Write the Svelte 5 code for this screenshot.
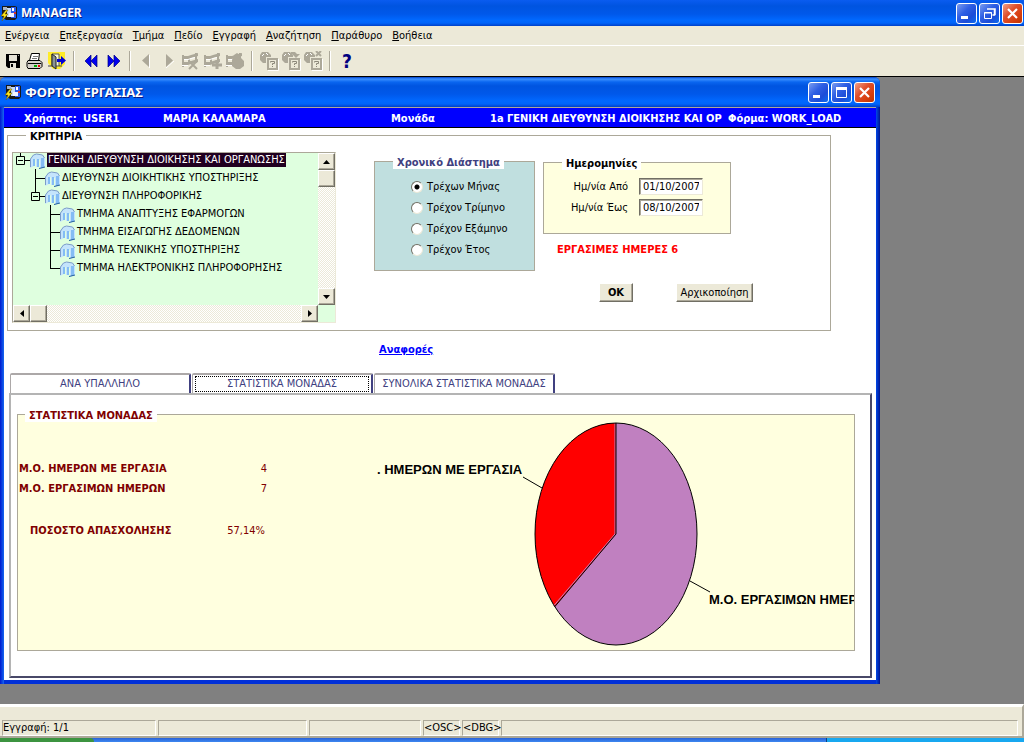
<script lang="ts">
    type Node = { text: string, depth: number, box?: boolean, last?: boolean, selected?: boolean }

    const menu = ["Ενέργεια", "Επεξεργασία", "Τμήμα", "Πεδίο", "Εγγραφή", "Αναζήτηση", "Παράθυρο", "Βοήθεια"]
    const nodes: Node[] = [
        { text: "ΓΕΝΙΚΗ ΔΙΕΥΘΥΝΣΗ ΔΙΟΙΚΗΣΗΣ ΚΑΙ ΟΡΓΑΝΩΣΗΣ", depth: 0, box: true, last: true, selected: true },
        { text: "ΔΙΕΥΘΥΝΣΗ ΔΙΟΙΚΗΤΙΚΗΣ ΥΠΟΣΤΗΡΙΞΗΣ", depth: 1 },
        { text: "ΔΙΕΥΘΥΝΣΗ ΠΛΗΡΟΦΟΡΙΚΗΣ", depth: 1, box: true, last: true },
        { text: "ΤΜΗΜΑ ΑΝΑΠΤΥΞΗΣ ΕΦΑΡΜΟΓΩΝ", depth: 2 },
        { text: "ΤΜΗΜΑ ΕΙΣΑΓΩΓΗΣ ΔΕΔΟΜΕΝΩΝ", depth: 2 },
        { text: "ΤΜΗΜΑ ΤΕΧΝΙΚΗΣ ΥΠΟΣΤΗΡΙΞΗΣ", depth: 2 },
        { text: "ΤΜΗΜΑ ΗΛΕΚΤΡΟΝΙΚΗΣ ΠΛΗΡΟΦΟΡΗΣΗΣ", depth: 2, last: true },
    ]
    const periods = ["Τρέχων Μήνας", "Τρέχον Τρίμηνο", "Τρέχον Εξάμηνο", "Τρέχον Έτος"]
    const tabs = ["ΑΝΑ ΥΠΑΛΛΗΛΟ", "ΣΤΑΤΙΣΤΙΚΑ ΜΟΝΑΔΑΣ", "ΣΥΝΟΛΙΚΑ ΣΤΑΤΙΣΤΙΚΑ ΜΟΝΑΔΑΣ"]

    let period = $state(periods[0])
    let dateFrom = $state("01/10/2007")
    let dateTo = $state("08/10/2007")
    let activeTab = $state(1)

    const workDays = 4
    const totalDays = 7

    // Pie geometry
    const cx = 247, cy = 112, rx = 81, ry = 111
    const angle = 2 * Math.PI * totalDays / (totalDays + workDays)
    const edgeX = cx + rx * Math.sin(angle)
    const edgeY = cy - ry * Math.cos(angle)

    /** Put back the default period and dates */
    function reset() {
        period = periods[0]
        dateFrom = "01/10/2007"
        dateTo = "08/10/2007"
    }
</script>

{#snippet appIcon()}
    <svg width="16" height="16" viewBox="0 0 16 16" aria-hidden="true">
        <path d="M1 1h13l2 1v11l-2 2H5L1 12z" fill="#181818" />
        <path d="M2 2h4v3H2z" fill="#a9b4c8" />
        <path d="M6 3h4v9H6z" fill="#c8dcf8" />
        <path d="M10 2h5v11h-5z" fill="#2a5cf0" />
        <path d="M8 8h5v4H8z" fill="#f4f4ff" />
        <path d="M11 3h2v3h-2z" fill="#fff" />
        <path d="M13 7h2v2h-2z" fill="#d03030" />
        <path d="M5 5L0 11h3l-2 5 6-7H4l3-4z" fill="#ffe818" stroke="#6b5500" stroke-width=".5" />
    </svg>
{/snippet}

{#snippet winButtons(restore: boolean)}
    <div class="win-buttons">
        <button class="win-btn" aria-label="Ελαχιστοποίηση">
            <svg width="19" height="19"><path d="M4 12h7v3H4z" fill="#fff" /></svg>
        </button>
        <button class="win-btn" aria-label="Μεγιστοποίηση">
            <svg width="19" height="19">
                {#if restore}
                    <path d="M7 5h8v6M14.500 5v6h-2" fill="none" stroke="#fff" stroke-width="1.500" />
                    <path d="M4.500 8.500h7v6h-7zM4 9h8" fill="none" stroke="#fff" />
                {:else}
                    <path d="M4.500 5v9.500h10V5" fill="none" stroke="#fff" /><path d="M4 4h11v3H4z" fill="#fff" />
                {/if}
            </svg>
        </button>
        <button class="win-btn close" aria-label="Κλείσιμο">
            <svg width="19" height="19"><path d="M5 5l9 9M14 5l-9 9" stroke="#fff" stroke-width="2.200" /></svg>
        </button>
    </div>
{/snippet}

{#snippet helpBox()}
    <path d="M1 4l2-3h6l3 3v2H7v6H4L1 9z" fill="#aca899" /><path d="M3 5l2-2M7 2l2 2" stroke="#fff" />
    <path d="M19.500 8v11.500H9" fill="none" stroke="#fff" />
    <path d="M8 7h11v12H8z" fill="#aca899" /><path d="M10 9h7v8h-7z" fill="#ece9d8" />
    <path d="M11.500 11.500v-1h4v2h-2v1.500M13.500 15v1" fill="none" stroke="#8c887a" />
{/snippet}

{#snippet fence()}
    <path d="M1 5h6l3-1 7-2v3l-7 2-3 1H1zM1 11h6l3-1 7-2v3l-7 2-3 1H1z" fill="#aca899" />
    <path d="M2 4v12M8 5v8M15 2v10" stroke="#aca899" stroke-width="2" />
    <path d="M3 8.500h4l3-1 4-1M1 14.500h6" fill="none" stroke="#fff" />
{/snippet}

<div class="app">
    <header class="title-bar main-title">
        {@render appIcon()}
        <h1>MANAGER</h1>
        {@render winButtons(true)}
    </header>

    <nav class="menu">
        {#each menu as item}
            <button><u>{item[0]}</u>{item.slice(1)}</button>
        {/each}
    </nav>

    <div class="toolbar">
        <button aria-label="Αποθήκευση">
            <svg width="20" height="20"><path d="M3 3h14v14H5l-2-2z" fill="#000" /><path d="M6 4h8v6H6zM7 12h6v5H7z" fill="#e4e2d6" /><path d="M8 13h2v3H8z" fill="#000" /><path d="M15 4h1v1h-1z" fill="#999" /></svg>
        </button>
        <button aria-label="Εκτύπωση">
            <svg width="20" height="20"><path d="M6.500 2.500h8l-1 7h-9z" fill="#fff" stroke="#000" /><path d="M8 5.500h5M7 7.500h5" stroke="#777" /><path d="M3 9.500h12l2 2v4l-2 2H3l-1-2v-4z" fill="#d4d0c8" stroke="#000" /><path d="M3 12.500h13" stroke="#000" /><path d="M9 15h3" stroke="#0a0" stroke-width="2" /><path d="M13 15h2" stroke="#e00" stroke-width="2" /></svg>
        </button>
        <button aria-label="Έξοδος">
            <svg width="20" height="20"><path d="M1 1h17v12l-5 5H6l-5-6z" fill="#ffec28" /><path d="M5 3h7v12H5z" fill="#f8f8d8" stroke="#555" /><path d="M5 3l4 3v12l-4-3z" fill="#8a9494" stroke="#222" /><path d="M1 15h5M12 15h3" stroke="#444" /><path d="M10 8h4V5l5 4.500-5 4.500v-3h-4z" fill="#0000d8" /></svg>
        </button>
        <i class="sep"></i>
        <button aria-label="Πρώτη">
            <svg width="20" height="20"><path d="M10 4v12l-6-6zM16 4v12l-6-6z" fill="#0000f0" stroke="#000080" stroke-width=".7" /></svg>
        </button>
        <button aria-label="Τελευταία">
            <svg width="20" height="20"><path d="M5 4v12l6-6zM11 4v12l6-6z" fill="#0000f0" stroke="#000080" stroke-width=".7" /></svg>
        </button>
        <i class="sep"></i>
        <button aria-label="Προηγούμενη">
            <svg width="20" height="20"><path d="M12.500 4v13" stroke="#fff" /><path d="M12 3v13l-7-6.500z" fill="#aca899" /></svg>
        </button>
        <button aria-label="Επόμενη">
            <svg width="20" height="20"><path d="M7 17l8-7" stroke="#fff" /><path d="M7 3v13l7-6.500z" fill="#aca899" /></svg>
        </button>
        <button aria-label="Διαγραφή εγγραφής">
            <svg width="20" height="20">{@render fence()}<path d="M8 10l8 8M16 10l-8 8" stroke="#aca899" stroke-width="2" /></svg>
        </button>
        <button aria-label="Νέα εγγραφή">
            <svg width="20" height="20">{@render fence()}<path d="M9 14h10M14 9v9" stroke="#aca899" stroke-width="3" /></svg>
        </button>
        <button aria-label="Κλείδωμα εγγραφής">
            <svg width="20" height="20">{@render fence()}<path d="M7 9l2-5 3-2 3 2 1 3 3 3v5l-4 3h-4l-4-3z" fill="#aca899" /></svg>
        </button>
        <i class="sep"></i>
        <button aria-label="Εισαγωγή ερωτήματος"><svg width="20" height="20">{@render helpBox()}</svg></button>
        <button aria-label="Εκτέλεση ερωτήματος"><svg width="20" height="20">{@render helpBox()}<path d="M10 1h4l2 2h3l-4 4-4-4h-1z" fill="#aca899" /></svg></button>
        <button aria-label="Ακύρωση ερωτήματος"><svg width="20" height="20">{@render helpBox()}<path d="M13 0l5 5M18 0l-5 5" stroke="#aca899" stroke-width="2" /></svg></button>
        <i class="sep"></i>
        <button class="help">?</button>
    </div>

    <main class="mdi">
        <section class="window">
            <header class="title-bar">
                {@render appIcon()}
                <h2>ΦΟΡΤΟΣ ΕΡΓΑΣΙΑΣ</h2>
                {@render winButtons(false)}
            </header>

            <div class="body">
                <div class="info">
                    <span>Χρήστης:</span>
                    <span>USER1</span>
                    <span>ΜΑΡΙΑ ΚΑΛΑΜΑΡΑ</span>
                    <span>Μονάδα</span>
                    <span>1a ΓΕΝΙΚΗ ΔΙΕΥΘΥΝΣΗ ΔΙΟΙΚΗΣΗΣ ΚΑΙ ΟΡ</span>
                    <span>Φόρμα: WORK_LOAD</span>
                </div>

                <fieldset class="criteria">
                    <legend>ΚΡΙΤΗΡΙΑ</legend>
                    <div class="tree">
                        <ul>
                            {#each nodes as node}
                                <li class="depth{node.depth}">
                                    <svg width="34" height="18" aria-hidden="true">
                                        <path d={node.last ? "M7.500 0v9.500" : "M7.500 0v18"} stroke="#000" />
                                        <path d="M7 9.500h10" stroke="#000" />
                                        {#if node.box}
                                            <path d="M3.500 5.500h8v8h-8z" fill="#dfffdf" stroke="#000" />
                                            <path d="M5 9.500h5" stroke="#000" />
                                        {/if}
                                        <path d="M17 17V8l3-4 3-1 7 1 2 3v9l-5 2V9l-2-1v8h-2V8l-2 1v6z" fill="#c4e4fc" />
                                        <path d="M20 8h2v7h-2zM24 8h2v8h-2zM28 7h3v9l-3 1z" fill="#84bcf4" />
                                        <path d="M17.500 16V8l3-4 3-1 6 1 2 3" fill="none" stroke="#7c9cc8" />
                                        <path d="M26 17.500l6-1.500" stroke="#24609c" />
                                    </svg>
                                    <span class:selected={node.selected}>{node.text}</span>
                                </li>
                            {/each}
                        </ul>
                        <div class="scroll vertical">
                            <button aria-label="Πάνω"><svg width="7" height="4"><path d="M0 4h7L3.500 0z" /></svg></button>
                            <div class="thumb"></div>
                            <button class="end" aria-label="Κάτω"><svg width="7" height="4"><path d="M0 0h7L3.500 4z" /></svg></button>
                        </div>
                        <div class="scroll">
                            <button aria-label="Αριστερά"><svg width="4" height="7"><path d="M4 0v7L0 3.500z" /></svg></button>
                            <div class="thumb"></div>
                            <button class="end" aria-label="Δεξιά"><svg width="4" height="7"><path d="M0 0v7l4-3.500z" /></svg></button>
                        </div>
                    </div>

                    <fieldset class="period">
                        <legend>Χρονικό Διάστημα</legend>
                        {#each periods as p}
                            <label><input type="radio" name="period" value={p} bind:group={period}>{p}</label>
                        {/each}
                    </fieldset>

                    <div class="right">
                        <fieldset class="dates">
                            <legend>Ημερομηνίες</legend>
                            <label for="from">Ημ/νία Από</label>
                            <input id="from" type="text" bind:value={dateFrom}>
                            <label for="to">Ημ/νία Έως</label>
                            <input id="to" type="text" bind:value={dateTo}>
                        </fieldset>
                        <p class="days">ΕΡΓΑΣΙΜΕΣ ΗΜΕΡΕΣ 6</p>
                        <div class="actions">
                            <button class="ok">OK</button>
                            <button onclick={reset}>Αρχικοποίηση</button>
                        </div>
                    </div>
                </fieldset>

                <a class="reports" href="#reports">Αναφορές</a>

                <div class="tabs" role="tablist">
                    {#each tabs as tab, i}
                        <button role="tab" class:active={activeTab === i} aria-selected={activeTab === i} onclick={() => activeTab = i}>
                            <span>{tab}</span>
                        </button>
                    {/each}
                </div>

                <div class="panel" role="tabpanel">
                    <fieldset class="stats">
                        <legend>ΣΤΑΤΙΣΤΙΚΑ ΜΟΝΑΔΑΣ</legend>
                        <dl>
                            <div><dt>Μ.Ο. ΗΜΕΡΩΝ ΜΕ ΕΡΓΑΣΙΑ</dt><dd>{workDays}</dd></div>
                            <div><dt>Μ.Ο. ΕΡΓΑΣΙΜΩΝ ΗΜΕΡΩΝ</dt><dd>{totalDays}</dd></div>
                            <div class="total"><dt>ΠΟΣΟΣΤΟ ΑΠΑΣΧΟΛΗΣΗΣ</dt><dd>57,14%</dd></div>
                        </dl>
                        <svg class="chart" height="228">
                            <ellipse {cx} {cy} {rx} {ry} fill="#c080c0" />
                            <path d="M{cx} {cy}L{edgeX} {edgeY}A{rx} {ry} 0 0 1 {cx} {cy - ry}z" fill="#f00" />
                            <path d="M{cx - 1} {cy - ry}V{cy}L{edgeX - 1} {edgeY - 1}" fill="none" stroke="#c080c0" />
                            <path d="M{cx} {cy - ry}V{cy}L{edgeX} {edgeY}" fill="none" stroke="#000" />
                            <ellipse {cx} {cy} {rx} {ry} fill="none" stroke="#000" />
                            <path d="M154 55l19 11M321 159l20 11" stroke="#000" />
                            <text x="8" y="52">. ΗΜΕΡΩΝ ΜΕ ΕΡΓΑΣΙΑ</text>
                            <text x="340" y="182">Μ.Ο. ΕΡΓΑΣΙΜΩΝ ΗΜΕΡ</text>
                        </svg>
                    </fieldset>
                </div>
            </div>
        </section>
    </main>

    <footer class="status">
        <span class="record">Εγγραφή: 1/1</span>
        <span class="message"></span>
        <span class="list"></span>
        <span>&lt;OSC&gt;</span>
        <span>&lt;DBG&gt;</span>
        <span class="fill"></span>
    </footer>
    <div class="taskbar"><i class="start"></i><i class="tray"></i></div>
</div>

<style>
    :global(body){
        margin: 0;
        background: #808080;
    }
    .app{
        display: flex;
        flex-direction: column;
        min-height: 100vh;
        font: 11px/14px "DejaVu Sans Condensed", "DejaVu Sans", sans-serif;
        color: #000;
    }
    button, input{
        font: inherit;
        color: inherit;
        margin: 0;
        padding: 0;
        box-sizing: border-box;
    }
    fieldset{
        margin: 0;
        padding: 0;
        min-width: 0;
        border: 1px solid #aca899;
    }
    legend{
        padding: 2px 4px 0;
        line-height: 13px;
        font-weight: bold;
        background: #fff;
    }
    svg{
        display: block;
        flex: none;
    }

    /* Title bars */
    .title-bar{
        display: flex;
        align-items: center;
        gap: 4px;
        height: 30px;
        box-sizing: border-box;
        padding: 0 5px;
        background: linear-gradient(#0040c8 0, #3c90ff 2px, #0a66f0 5px, #0054e0 9px, #0058ea 17px, #0068ff 24px, #0064fa 27px, #0040c8 30px);
        border-radius: 6px 6px 0 0;
    }
    .main-title{
        height: 26px;
        padding: 0 1px;
        border-radius: 0;
        background: linear-gradient(#0a5cf0 0, #0054e0 6px, #0058ea 14px, #0068ff 20px, #0064fa 23px, #0040c8 26px);
    }
    h1, h2{
        flex: 1;
        margin: 0;
        font: bold 12px/18px "Noto Sans", sans-serif;
        color: #fff;
        text-shadow: 1px 1px 0 #0a1883;
    }
    h2{
        font-size: 13px;
    }
    .win-buttons{
        display: flex;
        gap: 2px;
    }
    .win-btn{
        width: 21px;
        height: 21px;
        border: 1px solid #fff;
        border-radius: 3px;
        background: linear-gradient(135deg, #7a9cf0, #2f5fe4 40%, #1c4cd8 70%, #0a6cf0);
    }
    .win-btn.close{
        background: linear-gradient(135deg, #f0a088, #e0502c 40%, #d84010 70%, #c03400);
    }

    /* Menu and toolbar */
    .menu{
        display: flex;
        gap: 10px;
        height: 19px;
        padding-left: 5px;
        background: #ece9d8;
        border-bottom: 1px solid #fff;
    }
    .menu button, .toolbar button{
        border: 0;
        background: none;
    }
    .toolbar{
        display: flex;
        align-items: center;
        height: 30px;
        padding-left: 2px;
        background: #ece9d8;
        border-bottom: 1px solid #000;
    }
    .toolbar button{
        width: 22px;
        height: 22px;
        padding: 1px;
    }
    .toolbar .help{
        font: bold 19px/20px "DejaVu Sans Condensed", sans-serif;
        color: #000080;
    }
    .sep{
        width: 1px;
        height: 20px;
        margin: 0 5px;
        background: #aca899;
        border-right: 1px solid #fff;
    }

    /* Child window */
    .mdi{
        flex: 1;
        display: flex;
        padding: 0 144px 20px 0;
        background: #808080;
    }
    .window{
        flex: 1;
        min-width: 0;
        display: flex;
        flex-direction: column;
        background: linear-gradient(90deg, #0019cf, #1668f0 4px, #0048e8 calc(100% - 4px), #001490);
        border-radius: 6px 6px 0 0;
    }
    .body{
        flex: 1;
        display: flex;
        flex-direction: column;
        margin: 0 4px;
        background: #fff;
        border-bottom: 4px solid #0030d8;
    }
    .info{
        display: grid;
        grid-template-columns: 59px 80px 228px 99px 238px 1fr;
        align-items: center;
        height: 17px;
        padding: 2px 0 0 20px;
        background: #00f;
        border-top: 1px solid #aca899;
        border-bottom: 1px solid #000;
        color: #fff;
        font-weight: bold;
        white-space: nowrap;
        overflow: hidden;
    }
    .info span{
        overflow: hidden;
    }

    /* Criteria */
    .criteria{
        display: flex;
        align-items: flex-start;
        margin: 0 45px 0 3px;
        padding: 9px 0 7px 4px;
    }
    .criteria > legend{
        margin-left: 14px;
    }
    .tree{
        display: grid;
        grid-template-columns: 1fr 17px;
        grid-template-rows: 152px 17px;
        width: 322px;
        background: #dfffdf;
        border: 1px solid #aca899;
        border-color: #aca899 #ece9d8 #ece9d8 #aca899;
    }
    .tree ul{
        list-style: none;
        margin: 0;
        padding: 0;
        overflow: hidden;
    }
    .tree li{
        display: flex;
        align-items: center;
        height: 18px;
        white-space: nowrap;
    }
    /* list is scrolled down a bit */
    .tree li:first-child{
        margin-top: -2px;
    }
    .depth1{ padding-left: 15px; }
    .depth2{ padding-left: 30px; }
    .selected{
        padding: 0 1px;
        background: #200020;
        color: #fff;
    }
    .scroll{
        display: flex;
        background: repeating-conic-gradient(#fff 0 25%, #ece9d8 0 50%) 0 0 / 2px 2px;
    }
    .scroll.vertical{
        flex-direction: column;
    }
    .scroll button, .thumb, .actions button{
        display: flex;
        align-items: center;
        justify-content: center;
        box-sizing: border-box;
        background: #ece9d8;
        border: 1px solid;
        border-color: #fff #716f64 #716f64 #fff;
        box-shadow: -1px -1px 0 #aca899 inset;
    }
    .scroll button, .thumb{
        width: 17px;
        height: 17px;
    }
    .scroll .end{
        margin-left: auto;
    }
    .vertical .end{
        margin: auto 0 0;
    }
    .period{
        width: 159px;
        height: 115px;
        margin: 2px 8px 0 38px;
        background: #c0dfdf;
    }
    .period legend{
        margin-left: 18px;
        color: #404080;
    }
    .period label{
        display: flex;
        align-items: center;
        gap: 4px;
        height: 21px;
        padding-left: 36px;
    }
    .period legend + label{
        margin-top: 7px;
    }
    .period input{
        appearance: none;
        width: 12px;
        height: 12px;
        background: #fff;
        border: 1px solid;
        border-color: #716f64 #ece9d8 #ece9d8 #716f64;
        border-radius: 50%;
    }
    .period input:checked{
        background: radial-gradient(circle, #000 2px, #fff 3px);
    }
    .right{
        padding-top: 3px;
    }
    .dates{
        display: grid;
        grid-template-columns: 84px 64px;
        grid-auto-rows: 17px;
        align-items: center;
        gap: 4px 11px;
        box-sizing: border-box;
        width: 188px;
        height: 79px;
        padding-top: 8px;
        background: #ffffdf;
    }
    .dates legend{
        margin-left: 18px;
    }
    .dates label{
        text-align: right;
    }
    .dates input{
        width: 64px;
        height: 17px;
        padding: 0 3px;
        background: #fff;
        border: 1px solid;
        border-color: #716f64 #ece9d8 #ece9d8 #716f64;
        box-shadow: 1px 1px 0 #aca899 inset;
    }
    .days{
        margin: 9px 0 0 14px;
        color: #f00;
        font-weight: bold;
    }
    .actions{
        display: flex;
        gap: 43px;
        margin: 26px 0 0 56px;
    }
    .actions button{
        width: 77px;
        height: 19px;
    }
    .actions .ok{
        width: 34px;
        font-weight: bold;
    }
    .reports{
        align-self: flex-start;
        margin: 12px 0 16px 375px;
        color: #00f;
        font-weight: bold;
    }

    /* Tabs */
    .tabs{
        display: flex;
        gap: 1px;
        padding-left: 6px;
    }
    .tabs button{
        width: 181px;
        height: 20px;
        padding: 1px 2px;
        background: #fff;
        border: 1px solid #aca8a8;
        border-width: 2px 2px 0 1px;
        border-right-color: #404080;
        border-radius: 2px 2px 0 0;
        color: #404080;
        white-space: nowrap;
    }
    .tabs span{
        display: block;
        border: 1px solid transparent;
        line-height: 14px;
    }
    .tabs .active span{
        border: 1px dotted #000;
    }
    .panel{
        flex: 1;
        display: flex;
        margin: 0 4px 2px 5px;
        padding: 12px 15px 25px 6px;
        border: 2px solid;
        border-color: #b4b4b4 #484868 #484868 #b4b4b4;
    }
    .stats{
        flex: 1;
        display: flex;
        background: #ffffdf;
        color: #800000;
    }
    .stats legend{
        margin-left: 7px;
    }
    dl{
        flex: none;
        width: 351px;
        margin: 0;
        padding: 37px 0 0 1px;
        box-sizing: border-box;
    }
    dl div{
        display: flex;
        justify-content: space-between;
        width: 248px;
        line-height: 20px;
    }
    dl .total{
        margin-top: 22px;
        padding-left: 11px;
        width: 235px;
    }
    dt{
        font-weight: bold;
    }
    dd{
        margin: 0;
    }
    .chart{
        flex: 1;
        min-width: 0;
        overflow: hidden;
    }
    .chart text{
        font: bold 13px "Liberation Sans", sans-serif;
    }

    /* Status bar */
    .status{
        display: flex;
        gap: 2px;
        padding: 13px 4px 0 2px;
        background: #ece9d8;
        border-top: 3px solid #fff;
        border-bottom: 2px solid #aca899;
        border-right: 2px solid #aca899;
    }
    .status span{
        width: 35px;
        height: 14px;
        border: 1px solid;
        border-color: #aca899 #fff #fff #aca899;
    }
    .status .record{ width: 152px; }
    .status .message{ width: 147px; }
    .status .list{ width: 110px; }
    .status .fill{ flex: 1; }
    .taskbar{
        display: flex;
        justify-content: space-between;
        height: 4px;
        background: linear-gradient(#2a62d8, #3c88f0);
    }
    .start{
        width: 94px;
        background: #3c9440;
        border-radius: 0 4px 0 0;
    }
    .tray{
        width: 197px;
        background: #18a8f0;
        border-left: 1px solid #104080;
    }
</style>
